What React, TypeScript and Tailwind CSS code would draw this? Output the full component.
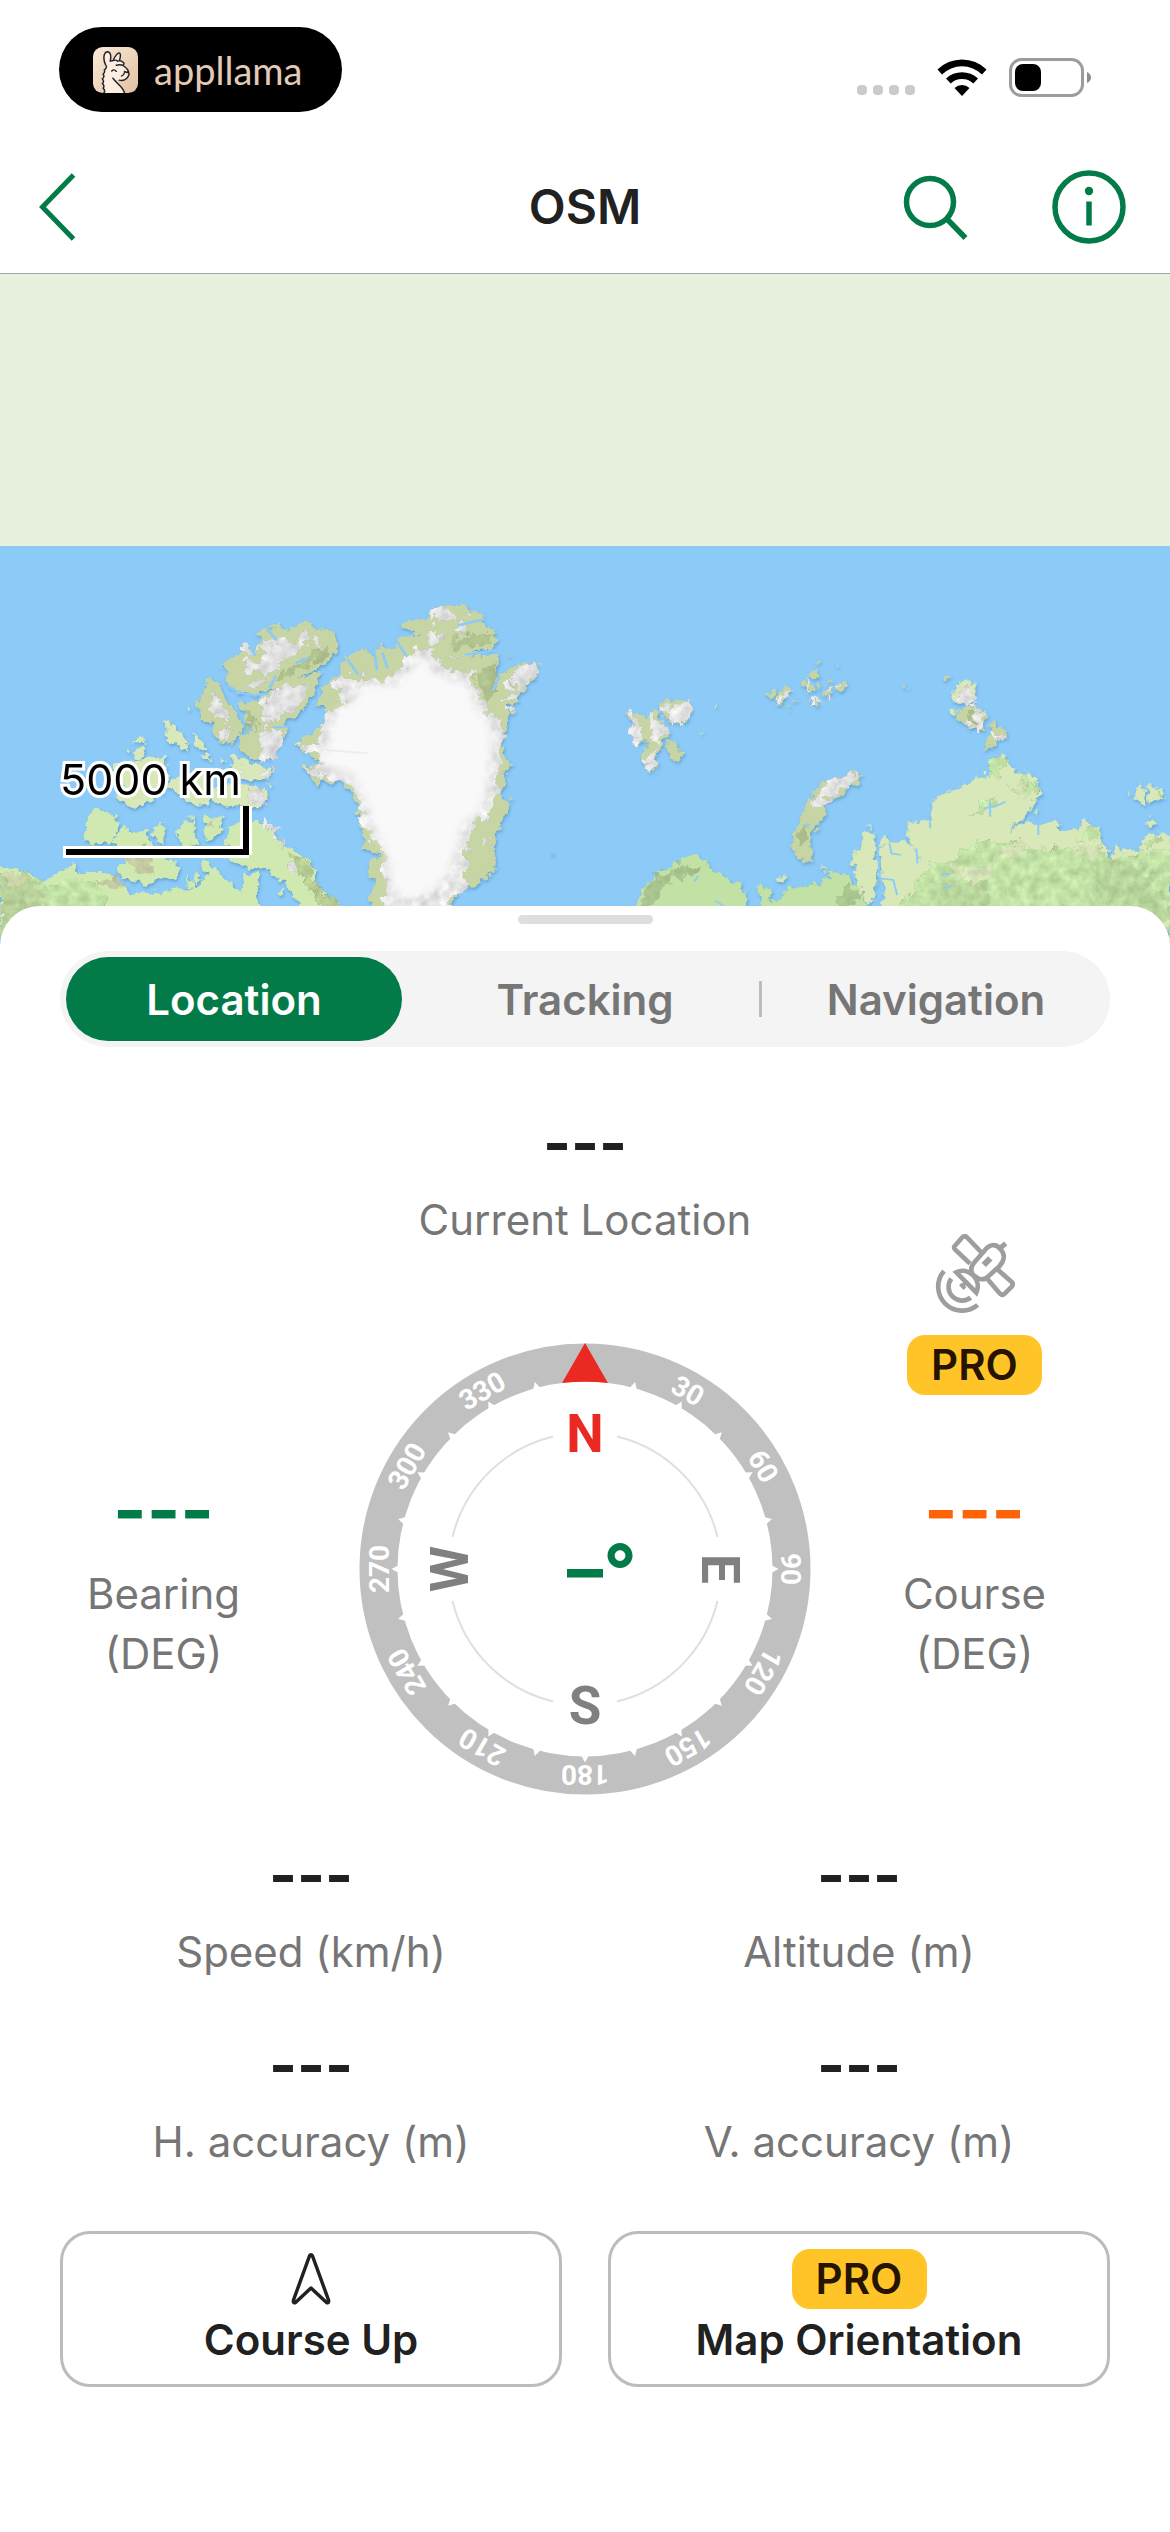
import { useState } from "react";

const TABS = ["Location", "Tracking", "Navigation"] as const;

function LlamaMark() {
  return (
    <svg viewBox="0 0 120 136" preserveAspectRatio="none" className="h-[46px] w-[45px]" aria-hidden="true">
      <defs>
        <linearGradient id="llama-bg" x1="0" y1="0" x2="1" y2="1">
          <stop offset="0" stopColor="#fbe9d8" />
          <stop offset="1" stopColor="#e2c1a2" />
        </linearGradient>
      </defs>
      <rect width="120" height="136" rx="26" ry="29" fill="url(#llama-bg)" />
      <path
        d="M30 136 C27 118 24 100 29 86 C26 74 30 62 34 52 C26 36 28 16 38 14 C47 14 49 26 46 42 L54 40 C58 26 68 14 72 19 C75 26 72 34 70 41 C78 38 84 44 80 54 C88 60 98 70 96 84 C92 96 80 100 70 98 C62 98 54 94 53 90 C62 108 80 116 84 136 Z"
        fill="#fdeedf"
      />
      <path
        d="M29 136 q5 -7 -2 -14 q5 -7 -2 -14 q6 -6 0 -14 q7 -6 2 -14 q6 -5 3 -12 q6 -4 6 -11 M34 54 C26 36 28 16 38 14 C47 14 49 26 46 42 M46 42 L54 40 C58 26 68 14 72 19 C75 26 72 34 70 41 M54 40 q8 -3 12 2 q10 -4 13 3 q6 2 2 8 M62 54 q12 -4 20 2 q14 10 14 26 C92 96 80 101 70 98 M50 71 q6 -7 12 1 M84 72 l7 4 l2 -4 M84 76 q-2 8 -8 10 M53 92 C62 108 80 116 84 136"
        fill="none"
        stroke="#22252b"
        strokeWidth="4"
        strokeLinecap="round"
        strokeLinejoin="round"
      />
    </svg>
  );
}

function StatusBar() {
  return (
    <div className="flex h-[140px] items-start justify-between pl-[59px] pr-[78px] pt-[27px]">
      <div className="flex h-[85px] w-[283px] items-center gap-4 rounded-full bg-black pl-[34px]">
        <LlamaMark />
        <span className="font-[Lato] text-[38px] leading-[44px] text-[#e3cab6]">appllama</span>
      </div>
      <div className="flex items-end gap-[22px] pt-[31px]">
        <div className="flex gap-[6px] pb-px">
          {[0, 1, 2, 3].map((i) => (
            <span key={i} className="size-[10px] rounded-[4px] bg-[#cbcbcb]" />
          ))}
        </div>
        <svg viewBox="0 0 50 37" className="h-[37px] w-[50px]" aria-label="Wi-Fi">
          <path d="M0.5 10.5 A35 35 0 0 1 49.5 10.5 L45 15.5 A28.5 28.5 0 0 0 5 15.5 Z" />
          <path d="M9 19.5 A23.5 23.5 0 0 1 41 19.5 L36.300 24.500 A16.500 16.500 0 0 0 13.700 24.500 Z" />
          <path d="M17.500 29 A11 11 0 0 1 32.500 29 L25 37 Z" />
        </svg>
        <svg viewBox="0 0 83 39" className="-mb-px h-[39px] w-[83px]" aria-label="Battery">
          <rect x="1.500" y="1.500" width="72" height="36" rx="11" fill="none" stroke="#9c9c9c" strokeWidth="3" />
          <rect x="6" y="6" width="26" height="27" rx="8" />
          <path d="M78 14 Q82 16 82 19.500 Q82 23 78 25 Z" fill="#8c8c8c" />
        </svg>
      </div>
    </div>
  );
}

function NavBar() {
  return (
    <header className="grid h-[134px] grid-cols-[1fr_auto_1fr] items-center border-b border-[#a3a3a3] pl-[39px] pr-11">
      <button type="button" aria-label="Back" className="justify-self-start text-[#027b48]">
        <svg viewBox="0 0 38 68" className="h-[68px] w-[38px]" fill="none" stroke="currentColor" strokeWidth="5">
          <path d="M34.500 2 L3.500 34 L34.500 66" />
        </svg>
      </button>
      <h1 className="pl-[5px] text-[48px] font-semibold leading-[60px] text-[#212121]">OSM</h1>
      <div className="flex items-center gap-[84px] justify-self-end text-[#027b48]">
        <button type="button" aria-label="Search">
          <svg viewBox="0 0 66 66" className="size-[66px]" fill="none" stroke="currentColor" strokeWidth="5.500">
            <circle cx="28" cy="28" r="23.500" />
            <path d="M45 45 L63.500 64" />
          </svg>
        </button>
        <button type="button" aria-label="Information">
          <svg viewBox="0 0 74 74" className="size-[74px]" fill="none" stroke="currentColor" strokeWidth="5.500">
            <circle cx="37" cy="37" r="34" />
            <circle cx="37" cy="21" r="4.200" fill="currentColor" stroke="none" />
            <path d="M37 31.500 V55.500" />
          </svg>
        </button>
      </div>
    </header>
  );
}

function WorldMap() {
  return (
    <svg
      viewBox="0 0 1170 404"
      preserveAspectRatio="xMidYMin slice"
      className="block h-[404px] w-full bg-[#8ccaf8]"
      role="img"
      aria-label="Map of the Arctic"
    >
      <defs>
        <filter id="coast" x="-5%" y="-5%" width="110%" height="110%" colorInterpolationFilters="sRGB">
          <feTurbulence type="fractalNoise" baseFrequency="0.11" numOctaves="3" seed="4" result="n" />
          <feDisplacementMap in="SourceGraphic" in2="n" scale="12" xChannelSelector="R" yChannelSelector="G" result="d" />
          <feDropShadow in="d" dx="1" dy="2" stdDeviation="1.5" floodColor="#3f7fb5" floodOpacity="0.5" />
        </filter>
        <filter id="relief" x="-5%" y="-5%" width="110%" height="110%" colorInterpolationFilters="sRGB">
          <feTurbulence type="fractalNoise" baseFrequency="0.1" numOctaves="4" seed="9" result="n" />
          <feDisplacementMap in="SourceGraphic" in2="n" scale="20" xChannelSelector="R" yChannelSelector="G" result="d" />
          <feColorMatrix in="n" type="matrix" values="1 0 0 0 0  1 0 0 0 0  1 0 0 0 0  0 0 0 0 1" result="g" />
          <feComposite in="d" in2="g" operator="arithmetic" k1="0.28" k2="0.86" />
        </filter>
        <filter id="soft" x="-20%" y="-20%" width="140%" height="140%">
          <feGaussianBlur stdDeviation="11" />
        </filter>
      </defs>

      <g filter="url(#coast)">
        <g transform="translate(0 -16) scale(0.38265 0.33333)">
          <path
            fill="#c7d5a4"
            d="M668 345 L690 300 L730 285 L740 300 L765 290 L795 278 L830 295 L850 300 L868 310 L888 345 L880 370 L850 400 L800 435 L760 460 L705 475 L680 490 L640 492 L600 475 L590 455 L600 430 L572 410 L600 375 L630 375 L641 342 L665 375 Z
            M850 420 L820 480 L785 545 L745 575 L750 600 L740 640 L712 660 L705 695 L670 690 L640 670 L620 640 L630 610 L660 605 L640 575 L625 520 L660 515 L690 500 L730 460 L790 445 Z
            M550 435 L570 460 L580 500 L605 530 L635 580 L630 610 L605 645 L575 640 L550 610 L553 580 L528 570 L520 530 L530 470 Z"
          />
          <path
            fill="#d8e8b8"
            d="M430 578 L455 585 L485 620 L490 665 L470 655 L440 630 Z M505 615 L535 635 L530 665 L508 650 Z M345 640 L370 618 L383 640 Z M345 665 L380 655 L372 690 L350 690 Z M525 672 h25 v15 h-25 Z M485 522 L499 540 L494 552 Z M575 680 L590 690 L583 700 Z M328 655 l12 8 l-4 10 Z
            M610 675 L660 700 L710 715 L695 752 L650 745 L600 725 Z M600 760 L690 778 L697 810 L680 832 L640 830 L565 825 L540 800 L570 780 Z
            M300 700 L380 690 L430 680 L440 740 L425 790 L400 810 L350 838 L335 820 L300 800 L330 770 L290 740 Z M445 740 L540 720 L550 828 L500 820 L445 770 Z M695 765 l12 -2 l-6 14 Z"
          />
          <path
            fill="#cfe9b0"
            d="M230 845 L260 838 L320 880 L285 940 L240 945 L215 940 L228 900 Z
            M290 930 L330 890 L345 910 L385 905 L400 950 L470 1010 L455 1040 L380 1062 L320 1045 L305 1010 L345 990 Z M400 895 L430 870 L430 945 L405 940 Z M460 905 L500 858 L515 945 L480 950 Z M535 860 L580 860 L575 900 L540 940 Z
            M590 940 L600 890 L650 870 L690 880 L720 900 L725 940 L770 960 L820 1010 L825 1060 L890 1130 L890 1220 L800 1220 L780 1110 L740 1060 L690 1020 L640 1015 L600 980 Z
            M0 1015 L60 1020 L110 1055 L190 1000 L200 1035 L260 1020 L330 1070 L340 1095 L410 1085 L500 1075 L530 1055 L560 1010 L580 1035 L605 1060 L630 1085 L640 1025 L680 1030 L670 1100 L680 1140 L680 1220 L0 1220 Z
            M525 985 L550 1000 L560 1020 L535 1025 Z M510 1020 L530 1050 L505 1060 Z M725 1080 L745 1080 L735 1100 Z M490 1040 l20 30 l-20 0 Z"
          />
          <path
            fill="#c7d5a4"
            d="M1140 228 L1210 228 L1258 262 L1270 280 L1303 325 L1290 350 L1230 375 L1305 375 L1300 440 L1340 410 L1370 395 L1408 415 L1390 460 L1355 500 L1355 520 L1325 520 L1328 580 L1310 620 L1310 670 L1335 700 L1325 730 L1310 780 L1330 840 L1310 880 L1298 920 L1300 1000 L1290 1020 L1250 1060 L1200 1078 L1170 1130 L1150 1220 L970 1220 L970 1090 L990 1050 L955 1030 L960 990 L1000 975 L950 960 L945 880 L920 790 L880 750 L830 765 L790 715 L835 700 L820 680 L768 645 L790 620 L840 590 L855 545 L828 520 L850 465 L890 440 L890 400 L905 375 L955 350 L975 380 L1000 340 L1030 360 L1040 320 L1095 318 L1045 290 L1080 265 L1120 270 Z
            M1330 535 l15 0 l-5 16 l-12 0 Z M1330 800 l15 5 l-12 10 Z M1325 375 l8 8 l-4 8 Z"
          />
        </g>

        <g transform="translate(570 -16) scale(0.38265 0.33333)">
          <path
            fill="#c7d5a4"
            d="M152 548 L190 548 L205 570 L215 530 L240 580 L260 610 L235 650 L225 700 L215 735 L190 700 L185 655 L215 640 L180 640 L160 590 Z M232 530 L250 505 L262 520 L278 505 L320 520 L322 550 L290 583 L255 570 Z M255 625 L275 635 L297 672 L280 697 L260 685 Z
            M512 490 L545 475 L530 505 Z M530 515 L565 468 L578 485 L545 525 Z M605 460 L615 452 L640 480 L615 485 Z M622 435 L640 418 L650 435 L635 447 Z M660 485 L688 472 L680 500 L662 498 Z M697 468 L720 448 L720 470 L700 482 Z M625 510 L655 505 L640 527 L625 524 Z M645 392 h16 v10 h-16 Z M692 402 l14 4 l-6 8 Z M645 452 l10 8 l-4 16 l-8 -6 Z M586 508 l14 8 l-12 4 Z M865 465 l14 0 l-6 9 Z M980 444 h15 v10 h-15 Z M565 528 l12 6 l-10 4 Z M670 455 l14 4 l-12 6 Z
            M745 712 L764 735 L742 768 L704 796 L668 828 L655 872 L634 915 L626 950 L637 994 L600 988 L576 950 L586 900 L601 860 L621 808 L656 760 L718 740 Z
            M1020 540 L1060 528 L1085 545 L1083 605 L1065 610 L1040 590 L1015 565 Z M1105 575 L1135 600 L1140 630 L1110 645 L1080 662 L1095 610 Z"
          />
          <path
            fill="#d8e8b8"
            d="M1037 440 L1060 475 L1055 518 L1020 525 L997 510 L1010 465 Z M990 535 L1018 540 L1005 556 Z M370 525 l18 -9 l-10 11 Z M332 605 l16 -2 l-6 6 Z M835 558 l14 8 Z M1040 712 l8 -4 Z
            M765 905 L800 908 L798 960 L808 1050 L790 1115 L780 1128 L760 1090 L740 1030 L738 970 L755 955 Z M770 885 l18 2 l-8 10 Z M545 1035 l18 5 l-8 18 l-10 -4 Z M652 1003 L665 1015 L675 1030 L655 1015 Z
            M805 960 L825 910 L832 940 L870 925 L900 950 L912 1000 L905 960 L882 920 L882 875 L940 870 L945 820 L970 795 L1030 765 L1075 740 L1095 745 L1100 700 L1130 675 L1147 690 L1145 710 L1165 715 L1160 730 L1205 730 L1225 760 L1225 800 L1195 850 L1145 905 L1190 870 L1225 880 L1275 875 L1285 900 L1330 905 L1335 872 L1385 890 L1390 950 L1412 988 L1425 945 L1450 965 L1500 965 L1495 925 L1520 908 L1568 920 L1568 1260 L825 1260 L815 1045 Z
            M1475 795 L1490 760 L1505 780 L1500 820 L1485 825 Z M1515 760 L1545 780 L1555 800 L1540 812 L1508 815 Z M1505 885 L1520 865 L1538 888 Z M1456 782 l8 2 l-4 10 Z M1205 845 l16 -6 l0 14 Z M1505 850 l10 0 l-4 10 Z"
          />
          <path
            fill="#c1e1a5"
            d="M178 1128 L190 1070 L240 1015 L300 985 L330 975 L362 1000 L400 1040 L440 1060 L468 1100 L465 1128 L480 1260 L100 1260 Z
            M495 1065 L525 1080 L520 1105 L540 1115 L570 1075 L600 1065 L660 1060 L680 1025 L720 1030 L755 1075 L775 1128 L775 1260 L500 1260 Z"
          />
        </g>
      </g>

      <g filter="url(#relief)">
        <g transform="translate(0 -16) scale(0.38265 0.33333)">
          <path
            fill="#e0e0e0"
            d="M668 350 L700 325 L750 335 L800 305 L810 345 L770 370 L740 395 L725 420 L670 425 L650 440 L638 425 L645 390 L690 390 L700 375 Z M635 468 L690 440 L704 450 L660 477 Z M818 328 l18 0 l0 28 l-16 0 Z
            M806 455 L782 530 L725 566 L680 550 L685 520 L730 472 Z M680 598 L747 605 L742 645 L705 697 L678 685 Z M690 560 l25 0 l5 18 l-32 5 Z
            M552 490 L592 528 L600 592 L575 572 L548 530 Z M568 600 L594 602 L602 640 L568 625 Z M690 710 L714 720 L697 752 L680 740 Z M643 778 L692 783 L690 827 L648 822 Z M690 873 L724 885 L730 907 L700 902 Z M723 922 l20 5 l-8 22 Z M750 998 L777 1013 L774 1034 L755 1022 Z M632 343 l17 5 l10 26 l-22 -4 Z M620 713 l24 5 l-8 24 Z
            M1125 248 L1160 230 L1192 243 L1187 267 L1135 274 Z M1113 293 L1147 293 L1152 325 L1132 360 L1108 320 Z M1193 283 L1220 283 L1212 314 L1188 302 Z M1213 238 l32 20 l-20 0 Z
            M1325 462 L1350 420 L1365 400 L1402 400 L1407 425 L1380 462 L1340 484 Z M1318 498 L1357 493 L1352 517 L1323 520 Z M1328 533 l16 0 l-4 18 Z M1253 928 L1277 923 L1272 957 Z M1178 373 l20 2 l-10 14 Z"
          />
          <path fill="#c1e1a5" d="M0 1030 L70 1030 L115 1070 L170 1050 L230 1050 L280 1090 L270 1128 L220 1220 L0 1220 Z" />
          <path fill="#b3c994" opacity="0.7" d="M0 1030 L60 1035 L105 1070 L115 1128 L80 1220 L0 1220 Z" />
          <path fill="#d8dcb4" opacity="0.7" d="M0 1025 L50 1030 L70 1060 L20 1070 Z M330 960 L380 950 L400 1030 L350 1020 Z M240 1050 L310 1040 L330 1075 L280 1075 Z M535 880 L570 870 L560 900 Z" />
          <path fill="#b9ce95" d="M750 965 L815 1010 L825 1060 L885 1128 L880 1160 L820 1110 L770 1010 Z" />
          <path fill="#b9ce95" opacity="0.6" d="M730 430 L850 350 L870 370 L790 420 L720 460 Z M640 530 L680 590 L650 600 Z M1200 320 L1290 310 L1280 345 L1180 360 Z M1240 440 L1290 400 L1290 520 L1270 520 Z" />
          <path
            fill="#e6e6e6"
            d="M1100 356 L1135 373 L1150 405 L1200 425 L1245 425 L1232 455 L1255 500 L1278 550 L1310 570 L1312 640 L1302 740 L1297 845 L1245 868 L1218 960 L1222 1060 L1180 1110 L1160 1220 L1008 1220 L1003 1060 L998 950 L955 900 L935 810 L912 760 L860 745 L818 738 L790 712 L845 700 L835 675 L770 648 L830 637 L852 543 L905 530 L862 458 L890 438 L1000 447 L1040 425 L1068 375 Z"
          />
        </g>
      </g>
      <g transform="translate(0 -16) scale(0.38265 0.33333)">
        <path
          filter="url(#soft)"
          fill="#f9f9f9"
          d="M1105 385 L1150 440 L1220 465 L1258 560 L1285 600 L1280 700 L1262 830 L1210 880 L1185 980 L1160 1050 L1130 1080 L1060 1110 L1025 1070 L1015 970 L980 900 L955 810 L925 735 L850 698 L850 655 L865 620 L870 560 L930 505 L950 470 L1040 465 L1080 410 Z"
        />
        <path
          fill="none"
          stroke="#8ccaf8"
          strokeWidth="7"
          strokeLinecap="round"
          d="M908 388 L935 432 M978 362 L985 418 M1038 335 L1062 378 M1200 285 L1265 268 M1218 374 L1300 360 M1000 370 l12 42 M700 300 l22 28 M775 398 L805 384 M706 472 L720 440 M600 470 Q640 505 700 490 M1305 440 L1288 480 M665 375 L655 350 M610 505 l6 30 M745 590 L715 592"
        />
        <path fill="none" stroke="#dcdcdc" strokeWidth="6" opacity="0.4" d="M850 660 L960 670 M895 460 L920 520" />
        <path fill="#78b5e4" d="M1440 970 h12 v16 h-12 Z" opacity="0.6" />
      </g>
      <g filter="url(#relief)">
        <g transform="translate(570 -16) scale(0.38265 0.33333)">
          <path
            fill="#e4e4e4"
            d="M150 546 L170 551 L180 590 L197 595 L187 644 L168 632 L158 590 Z M205 541 L224 541 L234 578 L260 608 L242 622 L234 652 L213 610 Z M190 683 L230 661 L215 734 L198 705 Z M238 530 L252 511 L270 540 L245 549 Z M275 518 L322 520 L320 552 L290 586 L256 570 Z
            M538 514 L560 481 L582 480 L548 526 Z M606 451 L644 480 L616 474 Z M658 485 L690 474 L680 502 Z M694 470 L724 458 L718 480 Z M636 500 l20 8 l-16 16 Z
            M740 716 L756 726 L740 760 L704 782 L670 812 L652 842 L630 842 L640 795 L676 755 L722 742 Z
            M1013 476 L1052 473 L1057 517 L1020 522 Z M1056 543 L1082 543 L1082 607 L1063 602 L1058 570 Z M1028 568 L1052 573 L1047 594 Z M1046 523 l18 2 l-6 22 Z M1093 598 L1120 618 L1137 613 L1117 636 Z"
          />
          <path
            fill="#c1e1a5"
            d="M950 1000 L1010 990 L1015 965 L1080 940 L1140 925 L1160 935 L1110 980 L1200 950 L1260 955 L1320 960 L1385 960 L1412 1000 L1480 970 L1568 960 L1568 1260 L850 1260 L855 1110 L900 1090 L915 1040 Z M1095 700 L1130 675 L1145 690 L1120 740 L1100 730 Z M1180 740 L1220 750 L1220 800 L1190 790 Z M1050 840 L1110 800 L1120 820 L1040 865 Z M1345 890 L1385 895 L1388 945 L1345 930 Z M1540 780 l14 20 l-14 10 Z M1505 930 L1540 920 L1530 950 L1505 950 Z"
          />
          <path fill="#d5e2b6" d="M990 1010 L1080 1010 L1110 980 L1100 1040 L1060 1060 L1000 1040 Z M1120 960 L1180 935 L1190 970 L1140 990 Z M1140 770 L1180 760 L1200 810 L1160 800 Z M1330 920 L1380 930 L1370 980 L1320 970 Z" />
          <path fill="#afcb93" opacity="0.55" d="M970 1060 L1080 1050 L1100 1100 L1060 1200 L960 1128 Z M1370 1010 L1410 1000 L1500 1010 L1540 1080 L1568 1130 L1568 1260 L1520 1200 L1450 1120 L1390 1130 L1365 1080 Z M230 1030 L290 1005 L340 1020 L260 1060 L220 1128 L190 1128 L200 1070 Z M720 1050 L755 1085 L765 1120 L700 1130 Z M590 900 L620 880 L618 930 L600 950 Z M1030 550 l20 0 l6 22 l-16 0 Z" />
        </g>
      </g>
      <g transform="translate(570 -16) scale(0.38265 0.33333)" fill="none" stroke="#8ccaf8" strokeWidth="5" strokeLinejoin="round">
        <path d="M803 950 L810 1045 L845 1050 L855 1095 M812 1045 L818 1080 L790 1130 M835 940 L840 970 L865 975 M905 955 L908 1000 M1098 815 L1098 860 M1080 835 L1110 830 L1138 815 M325 1055 L335 1038 M378 1112 L400 1126 M970 1035 L995 1032 M978 1072 L1002 1068 M1224 870 V915 M940 875 L942 895 M610 886 L628 884" />
      </g>
    </svg>
  );
}

function ScaleBar() {
  return (
    <div className="absolute left-[60px] top-[478px]">
      <div className="text-[43px] leading-[54px] text-black [-webkit-text-stroke:6px_white] [paint-order:stroke_fill]">
        5000 km
      </div>
      <svg viewBox="0 0 192 60" className="h-[60px] w-[192px]" fill="none" aria-hidden="true">
        <path d="M3 46 H189 M186 49 V-5" stroke="white" strokeWidth="12" />
        <path d="M6 46 H186 V-1" stroke="black" strokeWidth="6" />
      </svg>
    </div>
  );
}

function Tabs() {
  const [active, setActive] = useState(0);
  return (
    <div role="tablist" className="mt-[27px] grid h-24 grid-cols-3 gap-[15px] rounded-full bg-[#f4f4f4] p-[6px]">
      {TABS.map((label, i) => (
        <button
          key={label}
          type="button"
          role="tab"
          aria-selected={i === active}
          onClick={() => setActive(i)}
          className={
            i === active
              ? "rounded-full bg-[#027b48] text-[42px] font-semibold text-white"
              : i === 2
                ? "relative rounded-full text-[42px] font-semibold text-[#767676] before:absolute before:-left-[9px] before:top-6 before:h-9 before:w-[3px] before:bg-[#bdbdbd]"
                : "rounded-full text-[42px] font-semibold text-[#767676]"
          }
        >
          {label}
        </button>
      ))}
    </div>
  );
}

function Stat({ label }: { label: string }) {
  return (
    <div className="flex flex-col items-center gap-4 text-center">
      <span className="text-[60px] font-bold leading-[64px] text-[#212121]">---</span>
      <span className="text-[42px] leading-[60px] text-[#767676]">{label}</span>
    </div>
  );
}

function ProBadge() {
  return (
    <span className="flex h-[60px] w-[135px] items-center justify-center rounded-[18px] bg-[#ffc428] text-[42px] font-semibold leading-[60px] text-[#261300]">
      PRO
    </span>
  );
}

function SatelliteIcon() {
  return (
    <svg viewBox="228 102 240 240" className="size-20" fill="none" stroke="#9e9e9e" strokeWidth="14" aria-hidden="true">
      <path d="M333 191 L288 148 Q283 142 288 137 L310 112 Q317 105 324 112 L366 156" />
      <path d="M386 238 L423 281 Q430 288 437 281 L459 259 Q464 252 458 246 L414 207" />
      <path d="M345 188 L374 155 C390 132 410 130 423 146 C440 162 436 182 422 198 L388 229 C378 240 362 241 350 230 C334 220 332 204 345 188 Z" />
      <path d="M422 146 L440 130" strokeWidth="15" />
      <rect x="-14" y="-9" width="28" height="18" transform="translate(384 185) rotate(-45)" fill="#9e9e9e" stroke="none" />
      <path d="M292 217 C326 200 370 236 352 278 Z" />
      <path d="M326 243 L306 262 M304 252 L318 266" strokeWidth="11" />
      <path d="M255 213 A72 72 0 0 0 356 315" />
      <path d="M277 236 A41 41 0 0 0 335 293" />
    </svg>
  );
}

function Compass() {
  const ticks = Array.from({ length: 23 }, (_, i) => (i + 1) * 15);
  const degrees = Array.from({ length: 11 }, (_, i) => (i + 1) * 30);
  return (
    <svg viewBox="-226 -226 452 452" className="h-[452px] w-[452px]" role="img" aria-label="Compass">
      <circle r="206.500" fill="none" stroke="#c0c0c0" strokeWidth="38" />
      {ticks.map((a) => (
        <path key={a} d="M-4 -186 L0 -193.500 L4 -186 Z" fill="white" transform={`rotate(${a})`} />
      ))}
      <path d="M0 -226 L23 -186 Q0 -188.500 -23 -186 Z" fill="#eb2923" />
      {degrees.map((a) => (
        <text key={a} y="-196" transform={`rotate(${a})`} textAnchor="middle" className="fill-white font-[Roboto] text-[28px] font-bold">
          {a}
        </text>
      ))}
      {[0, 90, 180, 270].map((a) => (
        <path key={a} d="M32 -132.500 A136.500 136.500 0 0 1 132.500 -32" fill="none" stroke="#dfdfdf" strokeWidth="2" transform={`rotate(${a})`} />
      ))}
      <g textAnchor="middle" className="fill-[#808080] font-[Roboto] text-[53px] font-bold">
        <text y="-117" className="fill-[#eb2923]">N</text>
        <text y="-117" transform="rotate(90)">E</text>
        <text y="155">S</text>
        <text y="-117" transform="rotate(-90)">W</text>
      </g>
      <g className="fill-[#027b48] text-[72px] font-bold">
        <text y="26" textAnchor="middle">–</text>
        <text x="35" y="27" textAnchor="middle">°</text>
      </g>
    </svg>
  );
}

function AngleReading({ label, color }: { label: string; color: string }) {
  return (
    <div className="flex flex-col items-center gap-4 text-center">
      <span className={`text-[72px] font-bold leading-[76px] ${color}`}>---</span>
      <span className="text-[42px] leading-[60px] text-[#767676]">
        {label}
        <br />
        (DEG)
      </span>
    </div>
  );
}

function ActionButton({ label, children }: { label: string; children: React.ReactNode }) {
  return (
    <button
      type="button"
      className="flex flex-col items-center rounded-[30px] border-[3px] border-[#bcbcbc] pb-[14px] pt-[15px] text-[42px] font-semibold leading-[60px] text-[#212121]"
    >
      <span className="mb-px flex h-[60px] items-center justify-center">{children}</span>
      {label}
    </button>
  );
}

export default function App() {
  return (
    <div className="min-h-screen bg-white font-['Inter',sans-serif]">
      <StatusBar />
      <NavBar />
      <div className="relative bg-[#e8f1dd] pt-[272px]">
        <WorldMap />
        <ScaleBar />
      </div>

      <main className="relative -mt-11 rounded-t-[40px] bg-white px-[60px] pt-[9px]">
        <div className="mx-auto h-[9px] w-[135px] rounded-full bg-[#dedede]" />
        <Tabs />

        <div className="pt-[63px]">
          <Stat label="Current Location" />
        </div>

        <div className="-mx-[60px] -mt-4 grid grid-cols-[1fr_452px_1fr]">
          <div className="pr-8 pt-[238px]">
            <AngleReading label="Bearing" color="text-[#027b48]" />
          </div>
          <div className="pt-[109px]">
            <Compass />
          </div>
          <div className="flex flex-col items-center pr-8">
            <SatelliteIcon />
            <div className="pb-[77px] pt-[21px]">
              <ProBadge />
            </div>
            <AngleReading label="Course" color="text-[#ff630a]" />
          </div>
        </div>

        <div className="mt-[47px] grid grid-cols-2 gap-x-[46px] gap-y-[50px]">
          <Stat label="Speed (km/h)" />
          <Stat label="Altitude (m)" />
          <Stat label="H. accuracy (m)" />
          <Stat label="V. accuracy (m)" />
        </div>

        <div className="mt-[59px] grid grid-cols-2 gap-x-[46px] pb-16">
          <ActionButton label="Course Up">
            <svg viewBox="0 0 40 52" className="h-[52px] w-10" fill="none" stroke="#212121" strokeWidth="3.500" strokeLinejoin="round" aria-hidden="true">
              <path d="M18.500 3 Q20 0.500 21.500 3 L37.500 47 Q38.200 50.500 35.500 49.500 L20 35 L4.500 49.500 Q1.800 50.500 2.500 47 Z" />
            </svg>
          </ActionButton>
          <ActionButton label="Map Orientation">
            <ProBadge />
          </ActionButton>
        </div>
      </main>
    </div>
  );
}
